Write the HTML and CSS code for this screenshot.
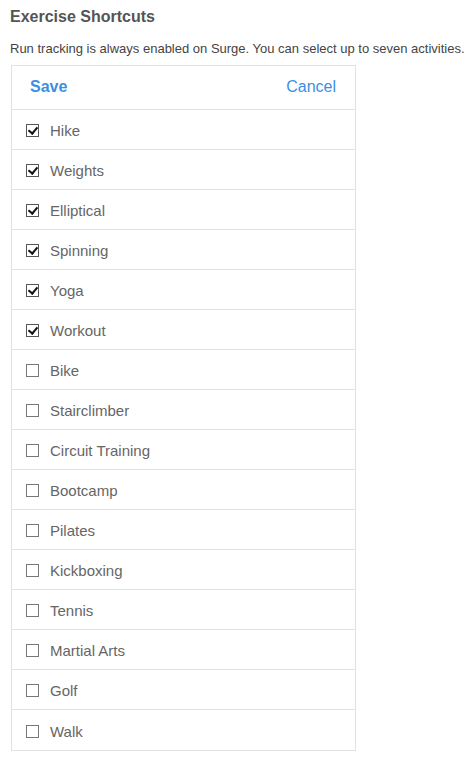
FILE: index.html
```html
<!DOCTYPE html>
<html lang="en">
<head>
  <meta charset="UTF-8">
  <title>Exercise Shortcuts</title>
  <link rel="stylesheet" href="styles.css">
</head>
<body>

  <h1 class="title">Exercise Shortcuts</h1>
  <p class="intro">Run tracking is always enabled on Surge. You can select up to seven activities.</p>

  <div class="panel">
    <div class="panel-head">
      <a href="#" class="save">Save</a>
      <a href="#" class="cancel">Cancel</a>
    </div>
    <ul class="list">
      <li class="row on"><span class="box"></span>Hike</li>
      <li class="row on"><span class="box"></span>Weights</li>
      <li class="row on"><span class="box"></span>Elliptical</li>
      <li class="row on"><span class="box"></span>Spinning</li>
      <li class="row on"><span class="box"></span>Yoga</li>
      <li class="row on"><span class="box"></span>Workout</li>
      <li class="row"><span class="box"></span>Bike</li>
      <li class="row"><span class="box"></span>Stairclimber</li>
      <li class="row"><span class="box"></span>Circuit Training</li>
      <li class="row"><span class="box"></span>Bootcamp</li>
      <li class="row"><span class="box"></span>Pilates</li>
      <li class="row"><span class="box"></span>Kickboxing</li>
      <li class="row"><span class="box"></span>Tennis</li>
      <li class="row"><span class="box"></span>Martial Arts</li>
      <li class="row"><span class="box"></span>Golf</li>
      <li class="row"><span class="box"></span>Walk</li>
    </ul>
  </div>

</body>
</html>
```

FILE: styles.css
```css
body { margin: 0; padding: 0 10px; font-family: "Liberation Sans", Arial, sans-serif; color: #555; background: #fff; }
.title { font-size: 16px; font-weight: bold; margin: 0; padding-top: 8px; line-height: 18px; color: #555; }
.intro { font-size: 13px; margin: 15px 0 0; line-height: 16px; color: #444; }
.panel { margin: 8px 0 0 1px; width: 343px; border: 1px solid #e2e2e2; }
.panel-head { display: flex; justify-content: space-between; align-items: center; box-sizing: border-box; height: 44px; padding: 0 19px 2px 18px; border-bottom: 1px solid #e2e2e2; }
.panel-head a { font-size: 16px; color: #3d8fe0; text-decoration: none; }
.save { font-weight: bold; }
.list { list-style: none; margin: 0; padding: 0; }
.row { display: flex; align-items: center; box-sizing: border-box; height: 40px; padding: 2px 0 0 14px; border-bottom: 1px solid #e2e2e2; font-size: 15px; color: #666; }
.row:last-child { border-bottom: none; }
.box { width: 11px; height: 11px; border: 1px solid #777; margin-right: 11px; position: relative; }
.row.on .box { border-color: #555; }
.row.on .box::after { content: ""; position: absolute; left: 3px; top: 0px; width: 4px; height: 7px; border: solid #111; border-width: 0 2px 2px 0; transform: rotate(40deg); }
```
